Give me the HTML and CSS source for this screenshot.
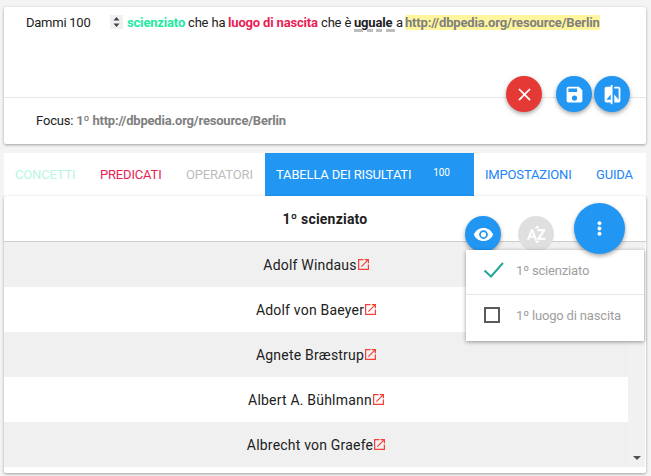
FILE: index.html
```html
<!DOCTYPE html>
<html lang="it">
<head>
<meta charset="utf-8">
<title>Tabella dei risultati</title>
<link rel="stylesheet" href="styles.css">
</head>
<body>
<section class="card query">
  <div class="sentence">
    <span class="limit">Dammi 100</span>
    <span class="spinner"><svg width="7" height="10" viewBox="0 0 7 10"><path d="M3.5 0 6.5 3.5H.5zM.5 6.5h6L3.5 10z" fill="#444"/></svg></span>
    <b class="concept">scienziato</b>
    <span class="t-che">che ha</span>
    <b class="predicate">luogo di nascita</b>
    <span class="t-chee">che è</span>
    <b class="operator">uguale<svg class="dash" width="41" height="3"><path d="M0 0h9v3H0zM13 0h6v3h-6zM22 0h6v3h-6zM32 0h9v3h-9z" fill="#bdbdbd"/></svg></b>
    <span class="t-a">a</span>
    <mark class="resource">http://dbpedia.org/resource/Berlin</mark>
  </div>
  <div class="focus">Focus: <b>1º http://dbpedia.org/resource/Berlin</b></div>
  <div class="query-actions">
    <button class="fab red" aria-label="Cancella"><svg width="21" height="21" viewBox="0 0 24 24"><path d="M19 6.41 17.59 5 12 10.59 6.41 5 5 6.41 10.59 12 5 17.59 6.41 19 12 13.41 17.59 19 19 17.59 13.41 12z"/></svg></button>
    <button class="fab" aria-label="Salva"><svg width="21" height="21" viewBox="0 0 24 24"><path d="M17 3H5a2 2 0 0 0-2 2v14a2 2 0 0 0 2 2h14a2 2 0 0 0 2-2V7zm-5 16a3 3 0 1 1 0-6 3 3 0 0 1 0 6zm3-10H5V5h10z"/></svg></button>
    <button class="fab" aria-label="Confronta"><svg width="21" height="21" viewBox="0 0 24 24"><path d="M10 3H5a2 2 0 0 0-2 2v14a2 2 0 0 0 2 2h5v2h2V1h-2zm0 15H5l5-6zm9-15h-5v2h5v13l-5-6v9h5a2 2 0 0 0 2-2V5a2 2 0 0 0-2-2z"/></svg></button>
  </div>
</section>

<nav class="tabs">
  <a class="tab concetti">CONCETTI</a>
  <a class="tab predicati">PREDICATI</a>
  <a class="tab operatori">OPERATORI</a>
  <a class="tab active">TABELLA DEI RISULTATI<span class="badge">100</span></a>
  <a class="tab impostazioni">IMPOSTAZIONI</a>
  <a class="tab guida">GUIDA</a>
</nav>

<section class="card results">
  <header class="head">1º scienziato</header>
  <div class="scroller">
    <ul class="rows">
      <li>Adolf Windaus<svg class="ext" viewBox="3 3 18 18"><path d="M19 19H5V5h7V3H3v18h18v-9h-2zM14 3v2h3.6l-9.8 9.8 1.4 1.4L19 6.4V10h2V3z"/></svg></li>
      <li>Adolf von Baeyer<svg class="ext" viewBox="3 3 18 18"><path d="M19 19H5V5h7V3H3v18h18v-9h-2zM14 3v2h3.6l-9.8 9.8 1.4 1.4L19 6.4V10h2V3z"/></svg></li>
      <li>Agnete Bræstrup<svg class="ext" viewBox="3 3 18 18"><path d="M19 19H5V5h7V3H3v18h18v-9h-2zM14 3v2h3.6l-9.8 9.8 1.4 1.4L19 6.4V10h2V3z"/></svg></li>
      <li>Albert A. Bühlmann<svg class="ext" viewBox="3 3 18 18"><path d="M19 19H5V5h7V3H3v18h18v-9h-2zM14 3v2h3.6l-9.8 9.8 1.4 1.4L19 6.4V10h2V3z"/></svg></li>
      <li>Albrecht von Graefe<svg class="ext" viewBox="3 3 18 18"><path d="M19 19H5V5h7V3H3v18h18v-9h-2zM14 3v2h3.6l-9.8 9.8 1.4 1.4L19 6.4V10h2V3z"/></svg></li>
    </ul>
    <div class="scrollbar"><svg width="8" height="4" viewBox="0 0 8 4"><path d="M0 0h8L4 4z" fill="#505050"/></svg></div>
  </div>
  <button class="fab eye" aria-label="Colonne"><svg width="21" height="21" viewBox="0 0 24 24"><path d="M12 4.5C7 4.5 2.7 7.6 1 12c1.7 4.4 6 7.500 11 7.500s9.300-3.100 11-7.500c-1.700-4.400-6-7.500-11-7.500zM12 17a5 5 0 1 1 0-10 5 5 0 0 1 0 10zm0-8a3 3 0 1 0 0 6 3 3 0 0 0 0-6z"/></svg></button>
  <button class="fab sort" aria-label="Ordina"><svg width="21" height="21" viewBox="0 0 24 24"><path d="M14.940 4.660h-4.720l2.360-2.360zM10.250 19.370h4.660l-2.330 2.330zM6.100 6.270 1.600 17.730h1.840l.92-2.450h5.110l.92 2.450h1.840L7.740 6.270zm-1.130 7.370 1.940-5.180 1.940 5.180zM15.730 16.140h6.120v1.590h-8.530v-1.290l5.920-8.560h-5.880v-1.600h8.300v1.260z"/></svg></button>
  <div class="menu">
    <div class="option"><svg width="22" height="18" viewBox="0 0 22 18"><path d="M1.500 8.500 8 14.500 20 1" fill="none" stroke="#26a69a" stroke-width="2"/></svg><span>1º scienziato</span></div>
    <div class="option"><svg width="22" height="18" viewBox="0 0 22 18"><path d="M2 1h14v14H2z" fill="none" stroke="#5a5a5a" stroke-width="2"/></svg><span>1º luogo di nascita</span></div>
  </div>
  <button class="fab more" aria-label="Altro"><svg width="21" height="21" viewBox="0 0 24 24"><path d="M12 8a2 2 0 1 0 0-4 2 2 0 0 0 0 4zm0 2a2 2 0 1 0 0 4 2 2 0 0 0 0-4zm0 6a2 2 0 1 0 0 4 2 2 0 0 0 0-4z"/></svg></button>
</section>
</body>
</html>
```
FILE: styles.css
```css
* { box-sizing: border-box; }
body { margin: 0; padding: 7px 5px 0 4px; height: 476px; overflow: hidden; background: #f4f4f4; color: #212121; font: 13px/20px Roboto, sans-serif; letter-spacing: -.17px; }
b { font-weight: 700; }
.card { position: relative; background: #fff; border-radius: 2px; box-shadow: 0 1px 3px rgba(0,0,0,.35); }
.query { height: 137px; }
.sentence { display: flex; height: 91px; padding: 6px 0 0 22px; border-bottom: 1px solid #e6e6e6; white-space: nowrap; }
.limit { width: 84px; letter-spacing: -.25px; }
.spinner { display: flex; align-items: center; justify-content: center; width: 13px; height: 14px; margin: 2px 4px 0 0; background: #f0f0f0; }
.concept { width: 61px; color: #1de9a0; }
.t-che { width: 40px; }
.predicate { width: 93px; color: #e91e55; }
.t-chee { width: 33px; }
.operator { position: relative; width: 42px; }
.dash { position: absolute; left: 0; top: 16px; }
.t-a { width: 9px; }
.resource { height: 15px; margin-top: 2px; line-height: 16px; border-radius: 2px; background: #fff59d; color: #808080; font-weight: 700; }
.focus { padding: 13px 0 0 32px; }
.focus b { color: #808080; letter-spacing: -.2px; }
.query-actions { position: absolute; right: 16px; top: 69px; display: flex; gap: 2px; }
.fab { display: flex; align-items: center; justify-content: center; width: 36px; height: 36px; padding: 0; border: 0; border-radius: 50%; background: #2196f3; box-shadow: 0 2px 4px rgba(0,0,0,.35); }
.fab svg { fill: #fff; }
.fab.red { background: #e53935; margin-right: 12px; }
.tabs { display: flex; height: 43px; margin-top: 9px; background: #fff; line-height: 43px; white-space: nowrap; }
.tab { padding-left: 11px; }
.concetti { width: 85px; color: #b9f6e0; }
.predicati { width: 86px; color: #e91e55; }
.operatori { width: 90px; color: #bdbdbd; }
.active { display: flex; width: 209px; background: #2196f3; color: #fff; }
.badge { margin: -2px 24px 0 auto; font-size: 10px; letter-spacing: 0; }
.impostazioni { width: 110px; color: #2185f3; }
.guida { color: #2185f3; padding-left: 12px; }
.results { height: 277px; }
.head { height: 46px; line-height: 47px; text-align: center; border-bottom: 1px solid #ccc; font-size: 14px; font-weight: 700; letter-spacing: .2px; }
.scroller { display: flex; height: 225px; }
.rows { flex: 1; margin: 0; padding: 0; list-style: none; font-size: 14px; letter-spacing: .2px; }
.rows li { display: flex; justify-content: center; height: 45px; line-height: 47px; }
.rows li:nth-child(odd) { background: #f0f0f0; }
.ext { width: 11px; height: 11px; margin: 17px 0 0 1px; fill: #f44336; }
.scrollbar { display: flex; align-items: flex-end; justify-content: center; width: 17px; margin-right: 1px; padding-bottom: 7px; background: #f1f1f1; }
.eye { position: absolute; left: 461px; top: 20px; }
.sort { position: absolute; left: 514px; top: 20px; background: #dfdfdf; box-shadow: none; }
.sort svg { stroke: #fff; stroke-width: .8px; }
.more { position: absolute; left: 570px; top: 7px; width: 51px; height: 51px; }
.more svg { stroke: #fff; stroke-width: .6px; }
.menu { position: absolute; left: 462px; top: 54px; width: 178px; height: 91px; background: #fff; box-shadow: 0 1px 4px rgba(0,0,0,.4); color: #9e9e9e; }
.option { display: flex; align-items: center; gap: 11px; height: 45px; padding: 0 0 3px 17px; }
.option:first-child { padding-bottom: 2px; border-bottom: 1px solid #e6e6e6; }
```
